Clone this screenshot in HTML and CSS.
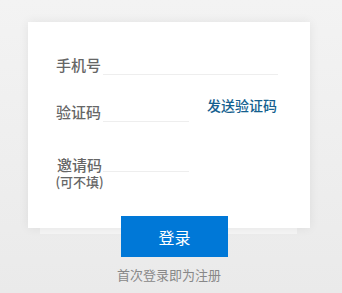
FILE: index.html
```html
<!DOCTYPE html>
<html lang="zh">
<head>
<meta charset="utf-8">
<link rel="stylesheet" href="styles.css">
</head>
<body>
<div class="page">
  <div class="card">
    <div class="row row-phone">
      <label class="label">手机号</label>
      <div class="field field-long"></div>
    </div>
    <div class="row row-code">
      <label class="label">验证码</label>
      <div class="field field-short"></div>
      <a class="send">发送验证码</a>
    </div>
    <div class="row row-invite">
      <label class="label label-stack"><span class="l1">邀请码</span><span class="l2">(可不填)</span></label>
      <div class="field field-short field-invite"></div>
    </div>
  </div>
  <div class="strip"></div>
  <button class="login">登录</button>
  <p class="note">首次登录即为注册</p>
</div>
</body>
</html>
```
FILE: styles.css
```css
html, body {
  margin: 0;
  padding: 0;
}
body {
  width: 342px;
  height: 293px;
  overflow: hidden;
  background: linear-gradient(#f3f3f3, #eaeaea);
  font-family: "Noto Sans CJK SC", "Noto Sans", sans-serif;
}
.page {
  padding-top: 22px;
}
.card {
  margin-left: 28px;
  width: 282px;
  height: 206px;
  box-sizing: border-box;
  padding: 33px 32px 0 28px;
  background: #fff;
  box-shadow: 0 0 10px rgba(0,0,0,0.07);
  position: relative;
}
.row {
  display: flex;
  align-items: flex-start;
}
.label {
  font-size: 15px;
  line-height: 20px;
  font-weight: 500;
  color: #666;
  width: 47px;
  flex: none;
  white-space: nowrap;
}
.field {
  height: 19px;
  border-bottom: 1px solid #eee;
}
.field-long {
  width: 175px;
}
.field-short {
  width: 86px;
}
.row-code {
  margin-top: 26.5px;
}
.send {
  margin-left: auto;
  margin-right: 1px;
  margin-top: -7px;
  font-size: 14px;
  line-height: 20px;
  font-weight: 500;
  color: #155f8f;
  cursor: pointer;
}
.row-invite {
  margin-top: 34.5px;
}
.label-stack {
  display: flex;
  flex-direction: column;
  align-items: center;
}
.l1 {
  font-size: 15px;
  line-height: 17px;
}
.l2 {
  font-size: 13px;
  line-height: 17px;
}
.field-invite {
  height: 15px;
}
.strip {
  margin-left: 40px;
  width: 257px;
  height: 6px;
  background: #f5f5f5;
}
.login {
  display: block;
  position: relative;
  margin: -18px 0 0 121px;
  width: 107px;
  height: 41px;
  border: none;
  padding: 0;
  background: #0078d7;
  color: #fff;
  font-family: inherit;
  font-size: 16px;
  cursor: pointer;
}
.note {
  margin: 8.5px 0 0 28px;
  width: 282px;
  text-align: center;
  font-size: 13px;
  line-height: 18px;
  color: #888;
}
```
